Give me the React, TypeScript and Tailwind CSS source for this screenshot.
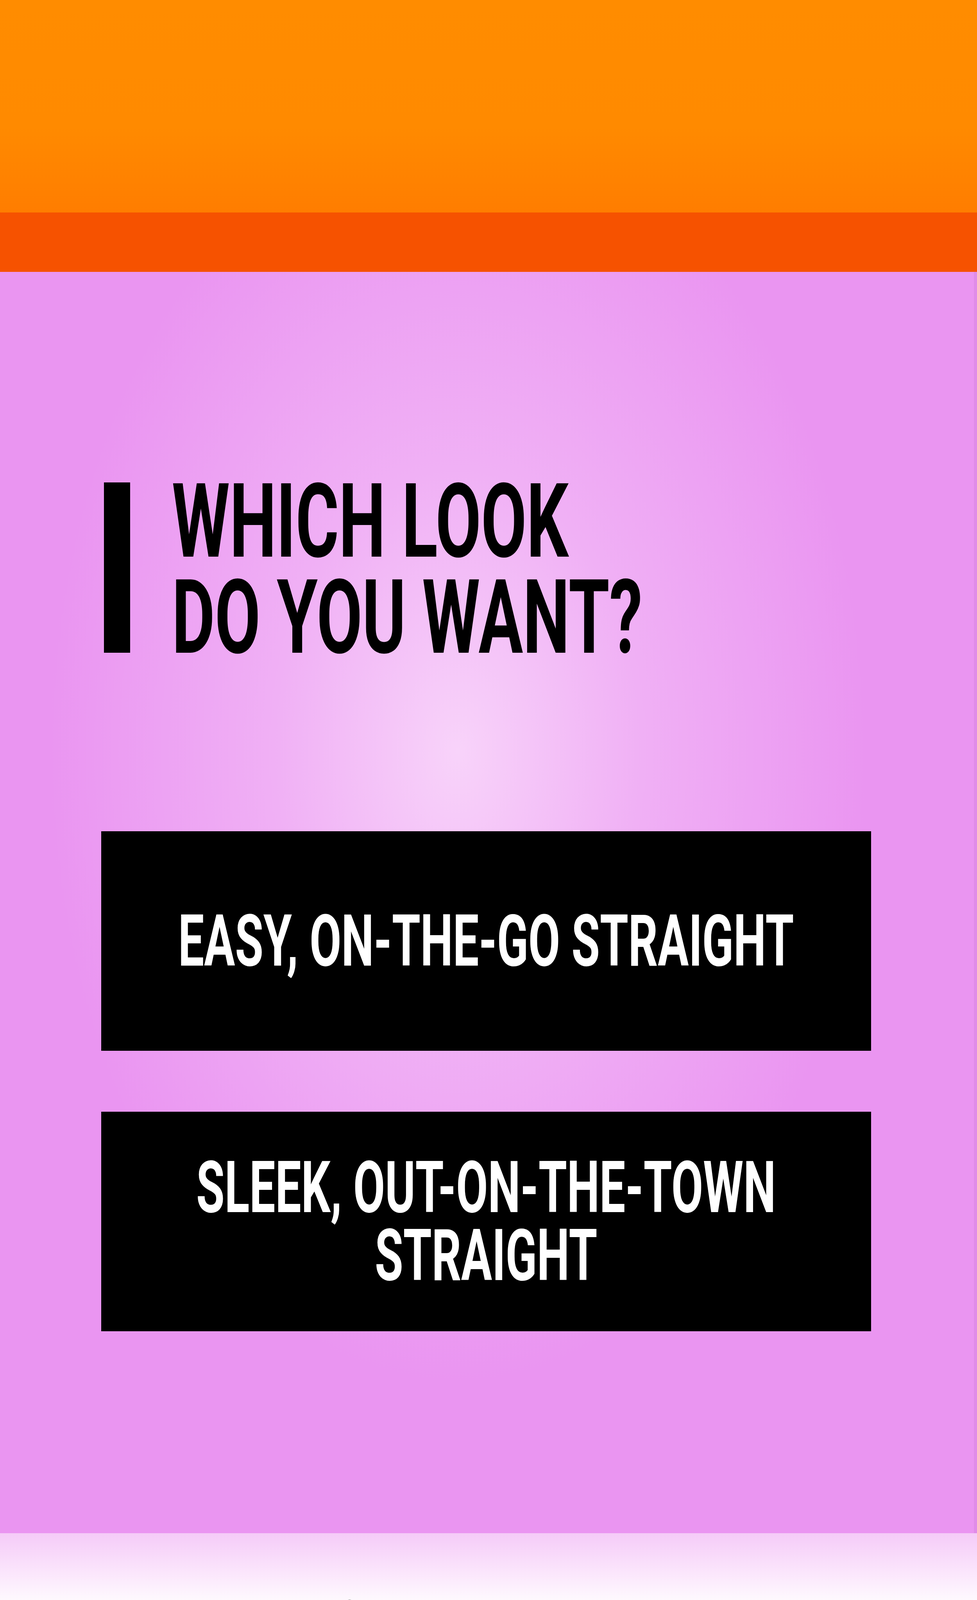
import React from "react";

const condensed = "font-[Roboto,'DejaVu_Sans',sans-serif] font-bold";

function ChoiceButton({ lines }: { lines: string[] }) {
  return (
    <button
      type="button"
      className="mx-[259px] w-[1970px] h-[562px] bg-black text-white flex items-center justify-center overflow-hidden"
    >
      <div
        className={`${condensed} whitespace-nowrap text-center text-[184px] leading-[174px] scale-x-[0.64] origin-center`}
      >
        {lines.map((l, i) => (
          <div key={i}>{l}</div>
        ))}
      </div>
    </button>
  );
}

export default function App() {
  return (
    <div className="w-[2500px] h-[4491px] overflow-hidden bg-white flex flex-col">
      {/* orange header */}
      <div className="h-[544px] shrink-0 bg-[linear-gradient(to_bottom,#ff8c00,#ff8a00_60%,#ff7d00)]" />
      <div className="h-[152px] shrink-0 bg-[#f65200]" />

      {/* quiz panel */}
      <div className="h-[3229px] shrink-0 flex flex-col pt-[516px] border-r-[8px] border-[#e08ce8] bg-[radial-gradient(ellipse_42%_50%_at_47%_38%,#f8d3fa_0%,#f0b0f5_45%,#ea95f1_100%)]">
        <div className="flex items-start pl-[266px]">
          <div className="w-[67px] h-[436px] mt-[23px] bg-black shrink-0" />
          <h1
            className={`${condensed} ml-[107px] text-black whitespace-nowrap text-[264px] leading-[246px] scale-x-[0.64] origin-left`}
          >
            <div>WHICH LOOK</div>
            <div>DO YOU WANT?</div>
          </h1>
        </div>

        <div className="mt-[424px] flex flex-col gap-[156px]">
          <ChoiceButton lines={["EASY, ON-THE-GO STRAIGHT"]} />
          <ChoiceButton lines={["SLEEK, OUT-ON-THE-TOWN", "STRAIGHT"]} />
        </div>
      </div>

      {/* footer link */}
      <div className="h-[566px] shrink-0 flex flex-col items-center pt-[146px] bg-[linear-gradient(to_bottom,#f5cbf8,#fbe6fc_18%,#ffffff_34%)] font-[Lato,sans-serif] text-black">
        <p className="font-light text-[100px] leading-[116px] tracking-[8px] whitespace-nowrap">
          I KNOW WHAT I WANT!
        </p>
        <a href="#" className="flex items-start whitespace-nowrap">
          <span className="font-black text-[100px] leading-[116px] tracking-[8px]">
            SHOP THE HAIRSPRAY + STYLING EVENT
          </span>
          <svg width="41" height="82" viewBox="0 0 41 82" className="ml-[64px] mt-[15px] shrink-0">
            <path d="M0 0 L41 41 L0 82 Z" fill="#000" />
          </svg>
        </a>
      </div>
    </div>
  );
}
